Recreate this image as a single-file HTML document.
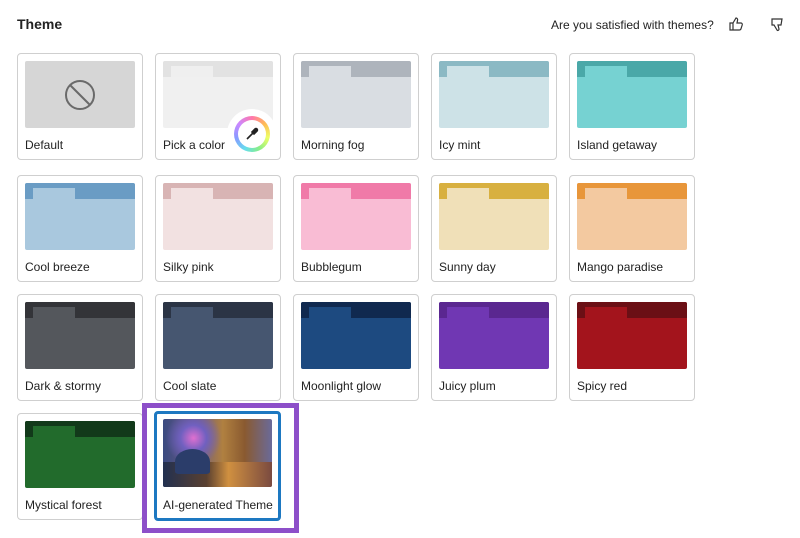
<!DOCTYPE html>
<html><head><style>
body{margin:0;width:800px;height:538px;background:#fff;font-family:"Liberation Sans",sans-serif;position:relative;overflow:hidden;color:#222}
.t{position:absolute;left:17px;top:16px;font-size:14px;font-weight:bold}
.q{position:absolute;left:551px;top:18px;font-size:12px}
.c{position:absolute;width:124px;height:105px;border:1px solid #cfcfcf;border-radius:4px;background:#fff;overflow:hidden}
.p{position:absolute;left:7px;top:7px;width:110px;height:67px;border-radius:2px;overflow:hidden}
.s{position:absolute;left:0;top:0;right:0;height:16px}
.tab{position:absolute;left:8px;top:5px;width:42px;height:11px}
.l{position:absolute;left:7px;top:84px;font-size:12px;color:#222}
</style></head><body>
<div class="t">Theme</div>
<div class="q">Are you satisfied with themes?</div>
<svg style="position:absolute;left:728px;top:16px" width="16" height="16" viewBox="0 0 16 16" fill="none" stroke="#333" stroke-width="1.2"><path d="M2 7h3v7H2zM5 7l3-5c1 0 2 1 1.5 2.5L9 7h4c1 0 1.5 1 1.2 2l-1.3 4c-.3.8-1 1-1.7 1H5"/></svg>
<svg style="position:absolute;left:769px;top:17px" width="16" height="16" viewBox="0 0 16 16" fill="none" stroke="#333" stroke-width="1.2"><path d="M3 2h10l-1 6H9l1 4c.2 1.2-1.5 2-2 1L5 8H3z"/></svg>
<div id="g"></div>
<script>
var d=[["Default"],["Pick a color","#e2e2e2","#f0f0f0","#efefef"],["Morning fog","#aeb4bc","#d9dde2"],["Icy mint","#8bb9c4","#cde2e7"],["Island getaway","#4aa8a8","#76d2d2"],
["Cool breeze","#6a9cc4","#a9c8de"],["Silky pink","#d8b4b4","#f2e1e1"],["Bubblegum","#f07aa8","#f9bcd4"],["Sunny day","#d8b040","#f0e0b8"],["Mango paradise","#e8963a","#f3c9a0"],
["Dark &amp; stormy","#333438","#54575c"],["Cool slate","#2b3445","#465670"],["Moonlight glow","#10294f","#1d4a80"],["Juicy plum","#5a2790","#7037b3"],["Spicy red","#6b0f15","#a3141c"],
["Mystical forest","#12391a","#226b2c"]];
var ys=[53,175,294,413],h="";
d.forEach(function(e,i){var x=17+(i%5)*138,y=ys[Math.floor(i/5)];
var inner;
if(i==0)inner='<div class="p" style="background:#d6d6d6"><svg style="position:absolute;left:39px;top:18px" width="32" height="32" viewBox="0 0 32 32" fill="none" stroke="#6a6a6a" stroke-width="2"><circle cx="16" cy="16" r="14"/><path d="M6 6l20 20"/></svg></div>';
else inner='<div class="p" style="background:'+e[2]+'"><div class="s" style="background:'+e[1]+'"></div><div class="tab" style="background:'+(e[3]||e[2])+'"></div></div>';
if(i==1)inner+='<div style="position:absolute;left:71px;top:55px;width:50px;height:50px;border-radius:50%;background:#fff"></div><div style="position:absolute;left:78px;top:62px;width:36px;height:36px;border-radius:50%;background:conic-gradient(#f7a,#fb5,#ef6,#8e8,#6de,#89f,#c8f,#f7a)"></div><div style="position:absolute;left:82px;top:66px;width:28px;height:28px;border-radius:50%;background:#fff"></div><svg style="position:absolute;left:89px;top:73px" width="14" height="14" viewBox="0 0 14 14"><path d="M2 12l6-6M9 3l2 2M7 5l2 2 3-3a1.4 1.4 0 00-2-2z" stroke="#222" stroke-width="1.6" fill="#222"/></svg>';
h+='<div class="c" style="left:'+x+'px;top:'+y+'px">'+inner+'<div class="l">'+e[0]+'</div></div>';});
document.getElementById('g').innerHTML=h;
</script>
<div style="position:absolute;left:142px;top:403px;width:147px;height:120px;border:5px solid #8d4fc9"></div>
<div style="position:absolute;left:154px;top:411px;width:121px;height:104px;border:3px solid #1d78c1;border-radius:4px;background:#fff">
<div style="position:absolute;left:6px;top:5px;width:109px;height:68px;border-radius:2px;background:radial-gradient(circle at 28% 28%,#e070d0 0,#7060c0 14%,transparent 30%),linear-gradient(90deg,#3a4a80 0,#6a5a80 30%,#b08040 55%,#8a5a30 75%,#6a6a9a 100%);overflow:hidden"><div style="position:absolute;left:0;bottom:0;width:100%;height:25px;background:linear-gradient(90deg,#223050,#5a4030 40%,#d09040 60%,#7a4a40)"></div><div style="position:absolute;left:12px;top:30px;width:35px;height:25px;border-radius:50% 50% 10% 10%;background:#2b3d6a"></div></div>
<div style="position:absolute;left:6px;top:84px;font-size:12px">AI-generated Theme</div></div>
</body></html>
